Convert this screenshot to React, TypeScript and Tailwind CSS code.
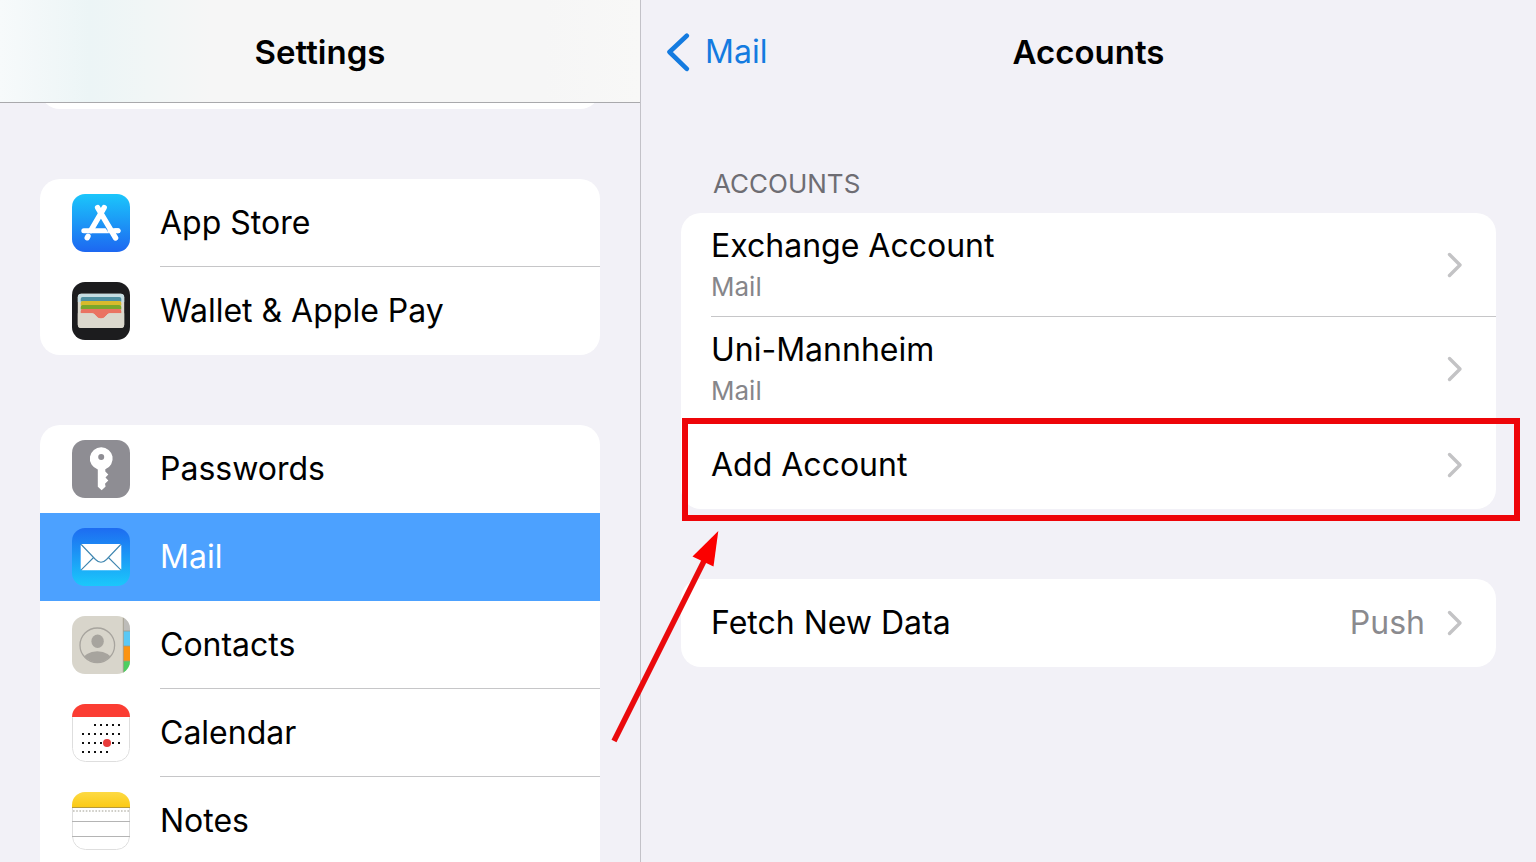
import React from "react";

const CORNER = 13;

function IconFrame({ id, children }: { id: string; children: React.ReactNode }) {
  return (
    <svg viewBox="0 0 58 58" className="size-[58px] shrink-0" aria-hidden="true">
      <defs>
        <clipPath id={`${id}-clip`}>
          <rect width="58" height="58" rx={CORNER} />
        </clipPath>
      </defs>
      <g clipPath={`url(#${id}-clip)`}>{children}</g>
    </svg>
  );
}

function AppStoreIcon() {
  return (
    <IconFrame id="store">
      <linearGradient id="store-fill" gradientUnits="userSpaceOnUse" x1="0" y1="0" x2="0" y2="58">
        <stop offset="0" stopColor="#1bc6fb" />
        <stop offset="1" stopColor="#1d67f1" />
      </linearGradient>
      <rect width="58" height="58" fill="url(#store-fill)" />
      <g fill="none" strokeLinecap="round">
        <path d="M11.800 36.700H46" stroke="#fff" strokeWidth="5" />
        <path d="M25.600 13.600L43.600 43.600" stroke="url(#store-fill)" strokeWidth="7.400" strokeLinecap="butt" />
        <path d="M38 36.700H46" stroke="#fff" strokeWidth="5" />
        <path d="M25.600 13.600L43.600 44" stroke="#fff" strokeWidth="5.400" />
        <path d="M32.200 13.600L18.800 36.700M16 42.200L15.200 43.800" stroke="#fff" strokeWidth="5.400" />
      </g>
    </IconFrame>
  );
}

function WalletIcon() {
  return (
    <IconFrame id="wallet">
      <rect width="58" height="58" fill="#1c1c1e" />
      <rect x="5.800" y="11.800" width="46.400" height="34.200" rx="3.500" fill="#dbd8cd" />
      <path d="M5.800 20V15.300a3.500 3.500 0 0 1 3.500-3.500h39.400a3.500 3.500 0 0 1 3.500 3.500V20z" fill="#c5dde2" />
      <path d="M8.700 19.500V17a2 2 0 0 1 2-2h36.600a2 2 0 0 1 2 2v2.500z" fill="#5090a1" />
      <path d="M8.700 23.500V21a2 2 0 0 1 2-2h36.600a2 2 0 0 1 2 2v2.500z" fill="#d8ba2c" />
      <path d="M8.700 27.500V25a2 2 0 0 1 2-2h36.600a2 2 0 0 1 2 2v2.500z" fill="#79a72b" />
      <path d="M8.700 31.300V29a2 2 0 0 1 2-2h36.600a2 2 0 0 1 2 2v2.300H38c-3.600 0-4 5.200-9 5.200s-5.400-5.200-9-5.200z" fill="#ea7362" />
      <path d="M5.800 31.300H20c3.600 0 4 5.200 9 5.200s5.400-5.200 9-5.200H52.200V42.500a3.500 3.500 0 0 1-3.500 3.500H9.300a3.500 3.500 0 0 1-3.500-3.500z" fill="#dbd8cd" />
    </IconFrame>
  );
}

function PasswordsIcon() {
  return (
    <IconFrame id="passwords">
      <rect width="58" height="58" fill="#8e8d93" />
      <path
        fill="#fff"
        fillRule="evenodd"
        d="M29.300 7.300a11.300 11.300 0 0 1 4 21.900v2.300L36.300 34.600 33.500 37.400 36.300 40.400 33 43.800 33.600 46.600 29.700 50.200 25.800 46.800V29.400A11.300 11.300 0 0 1 29.300 7.300zM29.200 14a3 3 0 1 0 0 6a3 3 0 1 0 0-6z"
      />
    </IconFrame>
  );
}

function MailIcon() {
  return (
    <IconFrame id="mail">
      <linearGradient id="mail-fill" x1="0" y1="0" x2="0" y2="1">
        <stop offset="0" stopColor="#1d6cf1" />
        <stop offset="1" stopColor="#1bc8fb" />
      </linearGradient>
      <rect width="58" height="58" fill="url(#mail-fill)" />
      <rect x="8.700" y="16" width="40.600" height="26.300" rx="1.500" fill="#fff" />
      <g fill="none" stroke="#3f86b0" strokeWidth="1.100">
        <path d="M9.200 16.500L23.500 31.500Q29 37 34.500 31.500L48.800 16.500" />
        <path d="M9.200 41.800L21.600 29.500M48.800 41.800L36.400 29.500" />
      </g>
    </IconFrame>
  );
}

function ContactsIcon() {
  return (
    <IconFrame id="contacts">
      <clipPath id="contacts-avatar">
        <circle cx="25.300" cy="29.300" r="17" />
      </clipPath>
      <rect width="58" height="58" fill="#d8d5cb" />
      <rect x="51.300" width="6.700" height="15" fill="#bdbcb9" />
      <rect x="51.300" y="15" width="6.700" height="15" fill="#5ac8f5" />
      <rect x="51.300" y="30" width="6.700" height="15" fill="#fb9311" />
      <rect x="51.300" y="45" width="6.700" height="13" fill="#4cce60" />
      <path d="M51.300 0V58M51.300 15H58M51.300 30H58M51.300 45H58" stroke="#9f9987" strokeWidth="0.800" />
      <g clipPath="url(#contacts-avatar)" fill="#a7a49e">
        <ellipse cx="25.600" cy="25.300" rx="6.200" ry="6.800" />
        <ellipse cx="25.300" cy="44.500" rx="14.500" ry="9.300" />
      </g>
      <circle cx="25.300" cy="29.300" r="17.300" fill="none" stroke="#a7a49e" strokeWidth="1.300" />
    </IconFrame>
  );
}

const CALENDAR_COLUMNS = [11, 17, 23, 29, 35, 41, 47];
const CALENDAR_WEEKS = [
  { y: 21, from: 2, to: 6 },
  { y: 30, from: 0, to: 6 },
  { y: 39, from: 0, to: 6 },
  { y: 48, from: 0, to: 4 },
];

function CalendarIcon() {
  return (
    <IconFrame id="calendar">
      <rect width="58" height="58" fill="#fff" />
      <rect x="0.500" y="0.500" width="57" height="57" rx={CORNER} fill="none" stroke="#dedede" />
      <rect width="58" height="13" fill="#fb3d33" />
      {CALENDAR_WEEKS.map((week) =>
        CALENDAR_COLUMNS.slice(week.from, week.to + 1).map((x) => (
          <rect key={`${x}-${week.y}`} x={x - 1} y={week.y - 1} width="2" height="2" fill="#111" />
        )),
      )}
      <circle cx="35" cy="39" r="4" fill="#e83b3b" />
    </IconFrame>
  );
}

function NotesIcon() {
  return (
    <IconFrame id="notes">
      <linearGradient id="notes-fill" x1="0" y1="0" x2="0" y2="1">
        <stop offset="0" stopColor="#fdda44" />
        <stop offset="1" stopColor="#fbc912" />
      </linearGradient>
      <rect width="58" height="58" fill="#fff" />
      <rect x="0.500" y="0.500" width="57" height="57" rx={CORNER} fill="none" stroke="#dedede" />
      <rect width="58" height="16" fill="url(#notes-fill)" />
      <path d="M0 15.500H58" stroke="#b59a3c" />
      <path d="M1 19H58" stroke="#c0bfb6" strokeWidth="1.600" strokeDasharray="1.600 1.600" />
      <path d="M0 29.500H58M0 44.500H58" stroke="#b4b4b4" />
    </IconFrame>
  );
}

interface SidebarItem {
  label: string;
  icon: React.ReactNode;
  active?: boolean;
  divider?: boolean;
}

const STORE_ITEMS: SidebarItem[] = [
  { label: "App Store", icon: <AppStoreIcon />, divider: true },
  { label: "Wallet & Apple Pay", icon: <WalletIcon /> },
];

const APP_ITEMS: SidebarItem[] = [
  { label: "Passwords", icon: <PasswordsIcon /> },
  { label: "Mail", icon: <MailIcon />, active: true },
  { label: "Contacts", icon: <ContactsIcon />, divider: true },
  { label: "Calendar", icon: <CalendarIcon />, divider: true },
  { label: "Notes", icon: <NotesIcon />, divider: true },
];

function SidebarGroup({ items, continues = false }: { items: SidebarItem[]; continues?: boolean }) {
  return (
    <ul className={`mx-10 overflow-hidden bg-white ${continues ? "rounded-t-[20px]" : "rounded-[20px]"}`}>
      {items.map((item) => (
        <li key={item.label}>
          <button
            type="button"
            aria-current={item.active ? "page" : undefined}
            className={`flex h-[88px] w-full items-center gap-[30px] pl-8 text-left ${
              item.active ? "bg-[#4ca1ff] text-white" : "text-black"
            }`}
          >
            {item.icon}
            <span
              className={`flex h-full flex-1 items-center border-b ${
                item.divider ? "border-[#c6c6c8]" : "border-transparent"
              }`}
            >
              {item.label}
            </span>
          </button>
        </li>
      ))}
    </ul>
  );
}

function Chevron() {
  return (
    <svg viewBox="0 0 16 26" className="h-[26px] w-4 shrink-0" fill="none" aria-hidden="true">
      <path d="M2.500 2.500L13 13L2.500 23.500" stroke="#c3c3c5" strokeWidth="3.400" strokeLinecap="round" strokeLinejoin="round" />
    </svg>
  );
}

function AccountRow({ name, detail }: { name: string; detail: string }) {
  return (
    <li className="pl-[30px]">
      <button
        type="button"
        className="flex h-[104px] w-full items-center justify-between border-b border-[#c6c6c8] pr-[33px] text-left"
      >
        <span className="flex flex-col">
          <span className="leading-[44px]">{name}</span>
          <span className="text-[26px] leading-[38px] text-[#86868a]">{detail}</span>
        </span>
        <Chevron />
      </button>
    </li>
  );
}

function Highlight() {
  return (
    <>
      <div className="pointer-events-none absolute -top-[3px] -right-6 -bottom-3 left-px border-6 border-[#ee0509]" />
      <svg
        viewBox="0 0 110 216"
        className="pointer-events-none absolute top-[108px] -left-[70px] h-[216px] w-[110px]"
        aria-hidden="true"
      >
        <path d="M3 212L93 32" stroke="#ea0a0c" strokeWidth="5.600" />
        <path d="M107.300 2L81.500 27.500L102.500 37.500Z" fill="#fb0000" />
      </svg>
    </>
  );
}

export default function App() {
  return (
    <div className="grid h-screen grid-cols-[5fr_7fr] overflow-hidden bg-[#f2f1f7] font-['Inter','Liberation_Sans',sans-serif] text-[32px] leading-10 text-black">
      <nav aria-label="Settings" className="min-w-0 overflow-hidden">
        <header className="relative z-10 flex h-[103px] items-center justify-center border-b border-[#a9a9ac] bg-[linear-gradient(90deg,#f7fafb_0%,#ecf5f6_14%,#f1f6f6_23%,#f6f6f6_33%,#f6f6f6_85%,#f8f8f7_100%)] pt-px">
          <h1 className="text-[33px] font-semibold">Settings</h1>
        </header>
        <div className="mx-10 -mt-12 h-[54px] rounded-[20px] bg-white" />
        <div className="mt-[70px] flex flex-col gap-[70px]">
          <SidebarGroup items={STORE_ITEMS} />
          <SidebarGroup items={APP_ITEMS} continues />
        </div>
      </nav>

      <main className="min-w-0 border-l border-[#c3c2c8]">
        <header className="grid h-[103px] grid-cols-[1fr_auto_1fr] items-center">
          <a href="#mail" className="flex items-center gap-[14px] pl-6 text-[#147be0]">
            <svg viewBox="0 0 26 40" className="h-10 w-[26px]" fill="none" aria-hidden="true">
              <path d="M21.800 3.800L4.500 20L21.800 36.800" stroke="currentColor" strokeWidth="4.600" strokeLinecap="round" strokeLinejoin="round" />
            </svg>
            Mail
          </a>
          <h2 className="text-[33px] font-semibold">Accounts</h2>
        </header>

        <div className="px-10 pt-[63px]">
          <h3 className="pb-[11px] pl-8 text-[26px] leading-9 text-[#6e6d73]">ACCOUNTS</h3>
          <ul className="rounded-[20px] bg-white">
            <AccountRow name="Exchange Account" detail="Mail" />
            <AccountRow name="Uni-Mannheim" detail="Mail" />
            <li className="relative">
              <button type="button" className="flex h-[88px] w-full items-center justify-between pr-[33px] pl-[30px] text-left">
                Add Account
                <Chevron />
              </button>
              <Highlight />
            </li>
          </ul>

          <div className="mt-[70px] rounded-[20px] bg-white">
            <button type="button" className="flex h-[88px] w-full items-center gap-[22px] pr-[33px] pl-[30px] text-left">
              <span className="flex-1">Fetch New Data</span>
              <span className="text-[#8a8a8e]">Push</span>
              <Chevron />
            </button>
          </div>
        </div>
      </main>
    </div>
  );
}
